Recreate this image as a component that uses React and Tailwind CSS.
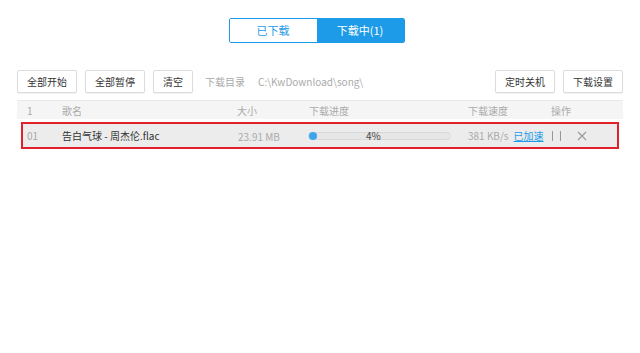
import React from 'react';

const font = { fontFamily: '"Microsoft YaHei", "Noto Sans CJK SC", sans-serif' };

function Btn({ children }) {
  return (
    <button className="h-[23px] px-[9px] border border-[#dcdcdc] rounded-[2px] bg-white text-[10px] text-[#333] leading-none shadow-[0_1px_1px_rgba(0,0,0,0.06)]">
      {children}
    </button>
  );
}

export default function App() {
  return (
    <div className="w-[640px] h-[353px] bg-white text-[10px] overflow-hidden" style={font}>
      <div className="flex justify-center pt-[18px] pr-[7px]">
        <div className="flex h-[25px] border border-[#1e9be8] rounded-[2px] overflow-hidden">
          <div className="w-[87px] flex items-center justify-center text-[11px] text-[#1e9be8] bg-white">已下载</div>
          <div className="w-[87px] flex items-center justify-center text-[11px] text-white bg-[#1e9be8]">下载中(1)</div>
        </div>
      </div>

      <div className="mx-[17px] mt-[27px] flex items-center">
        <div className="flex gap-[8px]">
          <Btn>全部开始</Btn>
          <Btn>全部暂停</Btn>
          <Btn>清空</Btn>
        </div>
        <span className="ml-[12px] text-[#aaa]">下载目录</span>
        <span className="ml-[13px] text-[#aaa]">C:\KwDownload\song\</span>
        <div className="ml-auto flex gap-[8px]">
          <Btn>定时关机</Btn>
          <Btn>下载设置</Btn>
        </div>
      </div>

      <div className="mx-[17px] mt-[7px]">
        <div className="flex items-center h-[19px] bg-[#f5f5f5] border-t border-[#e8e8e8] text-[#aaa]">
          <span className="w-[45px] pl-[10px]">1</span>
          <span className="w-[175px]">歌名</span>
          <span className="w-[72px]">大小</span>
          <span className="w-[159px]">下载进度</span>
          <span className="w-[83px]">下载速度</span>
          <span>操作</span>
        </div>
        <div className="mx-[4px] mt-[3px] h-[27px] flex items-center bg-[#ececec] border-2 border-[#e2202b] text-[#333]">
          <span className="w-[39px] pl-[4px] text-[#aaa]">01</span>
          <span className="w-[176px]">告白气球 - 周杰伦.flac</span>
          <span className="w-[70px] pt-[2px] text-[#aaa]">23.91 MB</span>
          <div className="w-[143px] relative h-[8px] rounded-full bg-[#e6e6e6] border border-[#dadada]">
            <div className="absolute left-0 top-[-1px] w-[8px] h-[8px] rounded-full bg-[#3aa6ee]" />
            <span className="absolute left-[57px] top-[-5px] text-[10px] leading-[16px] text-[#444]">4%</span>
          </div>
          <span className="ml-[17px] text-[#aaa]">381 KB/s</span>
          <span className="ml-[5px] text-[#1e9be8] underline">已加速</span>
          <span className="ml-[8px] flex gap-[7px] items-center">
            <span className="w-px h-[10px] bg-[#999]" />
            <span className="w-px h-[10px] bg-[#999]" />
          </span>
          <svg className="ml-[16px]" width="10" height="10" viewBox="0 0 10 10">
            <path d="M1 1L9 9M9 1L1 9" stroke="#999" strokeWidth="1.1" />
          </svg>
        </div>
      </div>
    </div>
  );
}
